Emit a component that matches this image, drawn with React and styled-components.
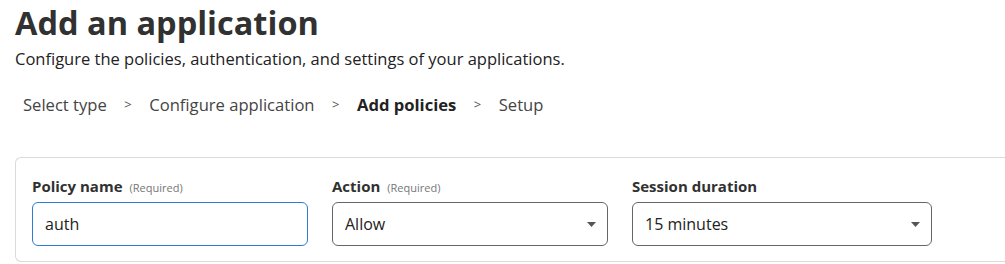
import React from 'react';
import styled, { createGlobalStyle } from 'styled-components';

const GlobalStyle = createGlobalStyle`
  body {
    margin: 0;
    background: #fff;
    font-family: "Open Sans", "Noto Sans", sans-serif;
    color: #313131;
  }
`;

const Page = styled.div`
  padding: 0 0 0 15px;
`;

const Title = styled.h1`
  margin: 0;
  font-size: 32.5px;
  line-height: normal;
  font-weight: 700;
  color: #313131;
`;

const Subtitle = styled.p`
  margin: 3px 0 0;
  font-size: 16.5px;
  line-height: 22px;
  color: #222;
`;

const Steps = styled.ol`
  list-style: none;
  margin: 12px 0 0;
  padding: 0 0 0 8px;
  display: flex;
  align-items: center;
  height: 44px;
  font-size: 16.6px;
`;

const Step = styled.li`
  color: ${p => (p.$active ? '#222' : '#444')};
  font-weight: ${p => (p.$active ? 700 : 400)};
`;

const Sep = styled.li`
  color: #555;
  font-size: 13px;
  padding: 0 17.5px;
`;

const Card = styled.div`
  margin-top: 31px;
  border: 1px solid #dadada;
  border-right: none;
  border-radius: 6px 0 0 6px;
  padding: 17px 16px 15px;
  display: flex;
  gap: 24px;
`;

const Field = styled.div`
  display: flex;
  flex-direction: column;
  width: ${p => p.$width}px;
`;

const Label = styled.label`
  font-size: 15px;
  font-weight: 700;
  color: #313131;
  line-height: 22px;
  height: 22px;
  margin-bottom: 5px;
`;

const Hint = styled.span`
  font-size: 11px;
  line-height: 1;
  font-weight: 400;
  color: #777;
  margin-left: 7px;
`;

const Input = styled.input`
  box-sizing: border-box;
  height: 44px;
  width: 100%;
  border: 1px solid #2f7bd6;
  border-radius: 6px;
  padding: 0 12px;
  font: inherit;
  font-size: 16px;
  color: #222;
  outline: none;
`;

const SelectBox = styled.div`
  box-sizing: border-box;
  height: 44px;
  width: 100%;
  border: 1px solid #666;
  border-radius: 6px;
  padding: 0 11px 0 12px;
  display: flex;
  align-items: center;
  justify-content: space-between;
  font-size: 16px;
  color: #222;
`;

const Caret = () => (
  <svg width="9" height="5" viewBox="0 0 9 5">
    <path d="M0 0h9L4.5 5z" fill="#555" />
  </svg>
);

const steps = ['Select type', 'Configure application', 'Add policies', 'Setup'];

const App = () => {
  return (
    <Page>
      <GlobalStyle />
      <Title>Add an application</Title>
      <Subtitle>Configure the policies, authentication, and settings of your applications.</Subtitle>
      <Steps>
        {steps.map((s, i) => (
          <React.Fragment key={s}>
            {i > 0 && <Sep>&gt;</Sep>}
            <Step $active={s === 'Add policies'}>{s}</Step>
          </React.Fragment>
        ))}
      </Steps>
      <Card>
        <Field $width={276}>
          <Label>Policy name<Hint>(Required)</Hint></Label>
          <Input defaultValue="auth" />
        </Field>
        <Field $width={276}>
          <Label>Action<Hint>(Required)</Hint></Label>
          <SelectBox>Allow<Caret /></SelectBox>
        </Field>
        <Field $width={300}>
          <Label>Session duration</Label>
          <SelectBox>15 minutes<Caret /></SelectBox>
        </Field>
      </Card>
    </Page>
  );
};

export default App;
